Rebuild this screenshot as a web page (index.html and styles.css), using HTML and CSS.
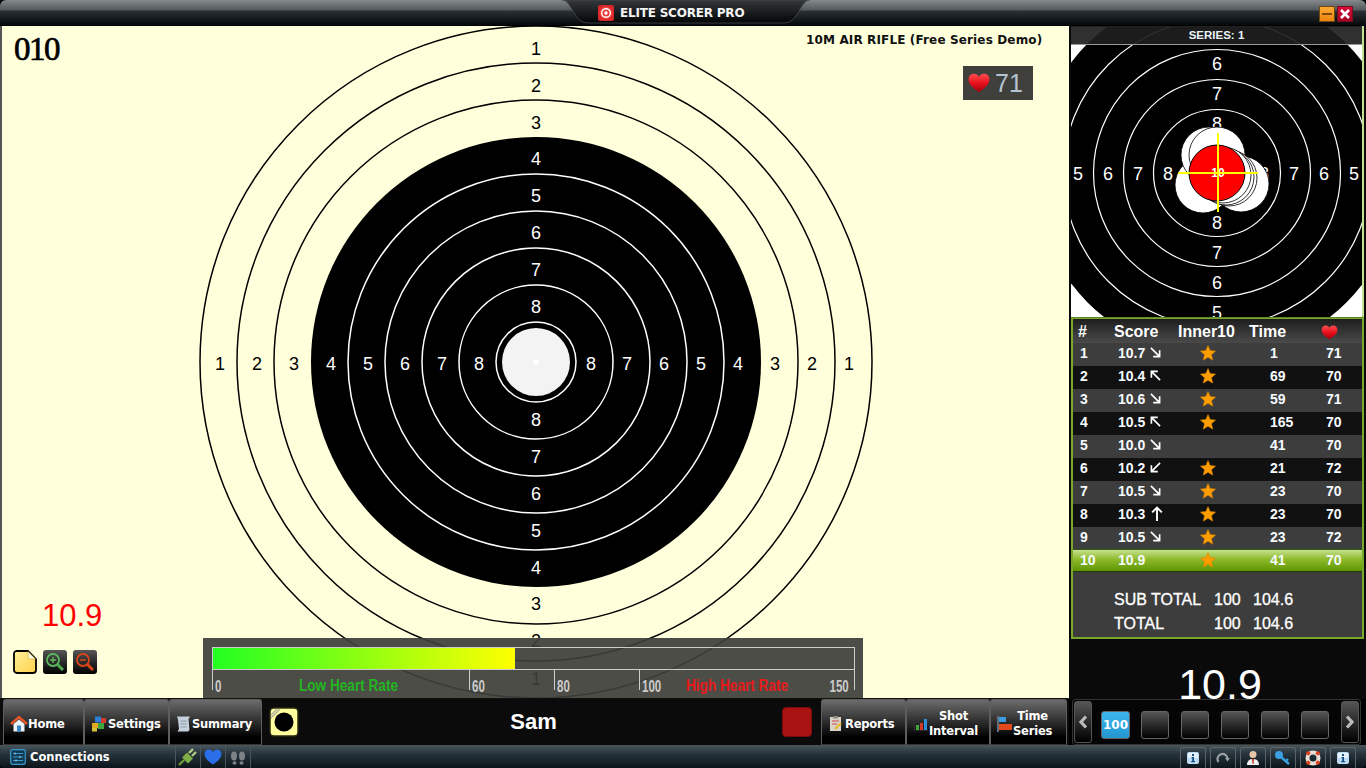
FILE: index.html
```html
<!DOCTYPE html>
<html lang="en">
<head>
    <meta charset="UTF-8">
    <title>Elite Scorer Pro</title>
    <link rel="stylesheet" href="styles.css">
</head>
<body>
<svg class="defs" width="0" height="0">
    <defs>
        <linearGradient id="heartFill" x1="0" y1="0" x2="0" y2="1">
            <stop offset="0" stop-color="#ff5050"/>
            <stop offset="0.5" stop-color="#e8101c"/>
            <stop offset="1" stop-color="#a00010"/>
        </linearGradient>
        <linearGradient id="noteFill" x1="0" y1="0" x2="1" y2="1">
            <stop offset="0" stop-color="#fff09a"/>
            <stop offset="1" stop-color="#ffd24a"/>
        </linearGradient>
        <symbol id="heart" viewBox="0 0 20 18">
            <path d="M10 17.5C4 13 .5 10 .5 5.6.5 2.6 2.8.6 5.4.6 7.4.6 9 1.6 10 3.4 11 1.6 12.600.6 14.600.6c2.600 0 4.900 2 4.900 5C19.500 10 16 13 10 17.500z" fill="url(#heartFill)"/>
        </symbol>
        <symbol id="star" viewBox="0 0 16 16">
            <polygon points="8,.5 10.200,5.600 15.600,6.100 11.500,9.700 12.800,15.200 8,12.300 3.200,15.200 4.500,9.700 .4,6.100 5.800,5.600" fill="#ff9d00" stroke="#d98200" stroke-width=".5"/>
        </symbol>
        <symbol id="arrow" viewBox="0 0 12 12">
            <path d="M1 1 10 10M10.500 3.500V10.500H3.500" fill="none" stroke="#fff" stroke-width="1.800"/>
        </symbol>
        <symbol id="info" viewBox="0 0 16 14">
            <rect x="2" y="1" width="12" height="12" rx="2" fill="#bcdcf5"/>
            <rect x="3" y="2" width="10" height="5" fill="#e4f2fc"/>
            <path d="M7 3h2v2H7zM6.500 6H9v4h1v1.200H6.200V10h1V7.200h-.7z" fill="#14507e"/>
        </symbol>
    </defs>
</svg>

<div class="app">
    <header class="titlebar">
        <div class="notch">
            <svg class="notch-bg" width="248" height="26" viewBox="0 0 248 26">
                <defs>
                    <linearGradient id="notchFill" x1="0" y1="0" x2="0" y2="1">
                        <stop offset="0" stop-color="#34383b"/>
                        <stop offset="1" stop-color="#030506"/>
                    </linearGradient>
                </defs>
                <path d="M0 0C10 0 11 23 26 23H222C237 23 238 0 248 0Z" fill="url(#notchFill)" stroke="#4b4f52" stroke-width=".7"/>
            </svg>
            <svg class="app-logo" width="16" height="16" viewBox="0 0 16 16">
                <rect width="16" height="16" rx="2" fill="#d62828"/>
                <circle cx="8" cy="8" r="6.500" fill="#f04040"/>
                <circle cx="8" cy="8" r="5" fill="#fff"/>
                <circle cx="8" cy="8" r="3.600" fill="#e83a3a"/>
                <circle cx="8" cy="8" r="1.700" fill="#fff"/>
            </svg>
            <span class="app-title">ELITE SCORER PRO</span>
        </div>
        <div class="win-btns">
            <div class="win-btn win-min"><span></span></div>
            <div class="win-btn win-close">
                <svg width="12" height="12" viewBox="0 0 12 12"><path d="M2 2 10 10M10 2 2 10" stroke="#fff" stroke-width="2.600"/></svg>
            </div>
        </div>
    </header>

    <div class="main">
        <section class="canvas">
            <svg class="target" width="1067" height="672" viewBox="2 26 1067 672">
                <circle cx="536" cy="362" r="336" class="ring-dark"/>
                <circle cx="536" cy="362" r="299" class="ring-dark"/>
                <circle cx="536" cy="362" r="262" class="ring-dark"/>
                <circle cx="536" cy="362" r="225" fill="#000"/>
                <circle cx="536" cy="362" r="188" class="ring-light"/>
                <circle cx="536" cy="362" r="151" class="ring-light"/>
                <circle cx="536" cy="362" r="114" class="ring-light"/>
                <circle cx="536" cy="362" r="77" class="ring-light"/>
                <circle cx="536" cy="362" r="40" class="ring-light"/>
                <circle cx="536" cy="362" r="34" fill="#f3f3f3"/>
                <circle cx="536" cy="362" r="3" fill="#fff"/>
                <g class="num num-dark">
                    <text x="536" y="48">1</text><text x="536" y="85">2</text><text x="536" y="122">3</text>
                    <text x="536" y="603">3</text><text x="536" y="640">2</text><text x="536" y="678">1</text>
                    <text x="220" y="363">1</text><text x="257" y="363">2</text><text x="294" y="363">3</text>
                    <text x="775" y="363">3</text><text x="812" y="363">2</text><text x="849" y="363">1</text>
                </g>
                <g class="num num-light">
                    <text x="536" y="158">4</text><text x="536" y="195">5</text><text x="536" y="232">6</text><text x="536" y="269">7</text><text x="536" y="306">8</text>
                    <text x="536" y="419">8</text><text x="536" y="456">7</text><text x="536" y="493">6</text><text x="536" y="530">5</text><text x="536" y="567">4</text>
                    <text x="331" y="363">4</text><text x="368" y="363">5</text><text x="405" y="363">6</text><text x="442" y="363">7</text><text x="479" y="363">8</text>
                    <text x="591" y="363">8</text><text x="627" y="363">7</text><text x="664" y="363">6</text><text x="701" y="363">5</text><text x="738" y="363">4</text>
                </g>
            </svg>

            <div class="shot-no">010</div>
            <div class="event-name">10M AIR RIFLE (Free Series Demo)</div>
            <div class="heart-badge">
                <svg width="22" height="20"><use href="#heart"/></svg>
                <span>71</span>
            </div>
            <div class="last-score">10.9</div>

            <div class="canvas-tools">
                <div class="tool tool-note">
                    <svg width="24" height="24" viewBox="0 0 24 24">
                        <path d="M3 1H15L23 9V20A3 3 0 0 1 20 23H4A3 3 0 0 1 1 20V4A3 3 0 0 1 3 1Z" fill="url(#noteFill)" stroke="#000" stroke-width="1.800"/>
                        <path d="M15 1.500V7A2 2 0 0 0 17 9H22.500Z" fill="#fffbe0" stroke="#c9a53a" stroke-width=".6"/>
                    </svg>
                </div>
                <div class="tool">
                    <svg width="24" height="24" viewBox="0 0 24 24">
                        <circle cx="10" cy="10" r="6" fill="none" stroke="#5cb85c" stroke-width="1.800"/>
                        <path d="M7 10h6M10 7v6" stroke="#5cb85c" stroke-width="1.500"/>
                        <path d="M14.500 14.500 20 20" stroke="#4ea84e" stroke-width="3"/>
                    </svg>
                </div>
                <div class="tool">
                    <svg width="24" height="24" viewBox="0 0 24 24">
                        <circle cx="10" cy="10" r="6" fill="none" stroke="#d8441a" stroke-width="1.800"/>
                        <path d="M7 10h6" stroke="#d8441a" stroke-width="1.500"/>
                        <path d="M14.500 14.500 20 20" stroke="#d8441a" stroke-width="3"/>
                    </svg>
                </div>
            </div>

            <div class="hr-panel">
                <div class="hr-bar"><div class="hr-fill" style="width: 47.1%"></div></div>
                <div class="hr-scale">
                    <div class="hr-seg hr-seg-low"><span>0</span><b class="hr-low">Low Heart Rate</b></div>
                    <div class="hr-seg hr-seg-a"><span>60</span></div>
                    <div class="hr-seg hr-seg-a"><span>80</span></div>
                    <div class="hr-seg hr-seg-high"><span>100</span><b class="hr-high">High Heart Rate</b><span class="hr-end">150</span></div>
                </div>
            </div>
        </section>

        <aside class="side">
            <div class="mini">
                <svg class="mini-target" width="291" height="290" viewBox="1071 27 291 290">
                    <rect x="1071" y="27" width="291" height="291" fill="#fff"/>
                    <circle cx="1217" cy="173" r="183" fill="#000"/>
                    <circle cx="1217" cy="173" r="153.500" class="mini-ring"/>
                    <circle cx="1217" cy="173" r="123.500" class="mini-ring"/>
                    <circle cx="1217" cy="173" r="93.500" class="mini-ring"/>
                    <circle cx="1217" cy="173" r="63.500" class="mini-ring"/>
                    <g class="num num-light">
                        <text x="1217" y="63">6</text><text x="1217" y="93">7</text><text x="1217" y="123">8</text>
                        <text x="1217" y="222">8</text><text x="1217" y="252">7</text><text x="1217" y="282">6</text><text x="1217" y="312">5</text>
                        <text x="1078" y="173">5</text><text x="1108" y="173">6</text><text x="1138" y="173">7</text><text x="1168" y="173">8</text>
                        <text x="1264" y="173">8</text><text x="1294" y="173">7</text><text x="1324" y="173">6</text><text x="1354" y="173">5</text>
                    </g>
                    <g class="shots">
                        <circle cx="1203" cy="185" r="28"/>
                        <circle cx="1241" cy="184" r="28"/>
                        <circle cx="1209" cy="155" r="28"/>
                        <circle cx="1217" cy="155" r="28"/>
                        <circle cx="1229" cy="178" r="28"/>
                        <circle cx="1226" cy="177" r="28"/>
                        <circle cx="1223" cy="175" r="28"/>
                    </g>
                    <circle cx="1217" cy="173" r="28" fill="#f00" stroke="#000"/>
                    <text x="1218" y="173" class="mini-ten">10</text>
                    <path d="M1218 133V212M1178 173H1258" stroke="#ff0" stroke-width="2"/>
                </svg>
                <div class="series-bar">SERIES: 1</div>
            </div>

            <div class="score-card">
                <div class="score-head">
                    <span>#</span><span>Score</span><span>Inner10</span><span>Time</span>
                    <svg width="17" height="15"><use href="#heart"/></svg>
                </div>
                <div class="score-row"><span>1</span><span>10.7</span><svg class="arr arr-se"><use href="#arrow"/></svg><svg class="star"><use href="#star"/></svg><span>1</span><span>71</span></div>
                <div class="score-row"><span>2</span><span>10.4</span><svg class="arr arr-nw"><use href="#arrow"/></svg><svg class="star"><use href="#star"/></svg><span>69</span><span>70</span></div>
                <div class="score-row"><span>3</span><span>10.6</span><svg class="arr arr-se"><use href="#arrow"/></svg><svg class="star"><use href="#star"/></svg><span>59</span><span>71</span></div>
                <div class="score-row"><span>4</span><span>10.5</span><svg class="arr arr-nw"><use href="#arrow"/></svg><svg class="star"><use href="#star"/></svg><span>165</span><span>70</span></div>
                <div class="score-row"><span>5</span><span>10.0</span><svg class="arr arr-se"><use href="#arrow"/></svg><i></i><span>41</span><span>70</span></div>
                <div class="score-row"><span>6</span><span>10.2</span><svg class="arr arr-sw"><use href="#arrow"/></svg><svg class="star"><use href="#star"/></svg><span>21</span><span>72</span></div>
                <div class="score-row"><span>7</span><span>10.5</span><svg class="arr arr-se"><use href="#arrow"/></svg><svg class="star"><use href="#star"/></svg><span>23</span><span>70</span></div>
                <div class="score-row"><span>8</span><span>10.3</span><svg class="arr arr-up" viewBox="0 0 12 14"><path d="M6 14V2M1.500 6 6 1.500 10.500 6" fill="none" stroke="#fff" stroke-width="1.800"/></svg><svg class="star"><use href="#star"/></svg><span>23</span><span>70</span></div>
                <div class="score-row"><span>9</span><span>10.5</span><svg class="arr arr-se"><use href="#arrow"/></svg><svg class="star"><use href="#star"/></svg><span>23</span><span>72</span></div>
                <div class="score-row score-row-now"><span>10</span><span>10.9</span><i></i><svg class="star"><use href="#star"/></svg><span>41</span><span>70</span></div>
                <div class="score-totals">
                    <div class="total-row"><span>SUB TOTAL</span><span>100</span><span>104.6</span></div>
                    <div class="total-row"><span>TOTAL</span><span>100</span><span>104.6</span></div>
                </div>
            </div>

            <div class="big-score">10.9</div>
        </aside>
    </div>

    <div class="bottom">
        <nav class="toolbar">
            <a class="tb-btn tb-home">
                <svg width="18" height="18" viewBox="0 0 18 18">
                    <path d="M1 9 9 2 17 9" fill="none" stroke="#e8562a" stroke-width="2.400"/>
                    <path d="M3.500 9 9 4.500 14.500 9V16.500H3.500Z" fill="#eef3f8"/>
                    <rect x="7" y="10.500" width="4" height="6" fill="#3d86c6"/>
                </svg>
                Home
            </a>
            <a class="tb-btn tb-settings">
                <svg width="18" height="18" viewBox="0 0 18 18">
                    <rect x="5" y="1.500" width="6" height="6" fill="#2f7fd8"/>
                    <rect x="11" y="3" width="5" height="5" fill="#d8392b"/>
                    <rect x="2" y="8" width="6" height="5" fill="#e0a81e"/>
                    <rect x="8" y="8" width="6" height="6" fill="#3fa83a"/>
                    <rect x="2" y="13" width="5" height="3.500" fill="#d8c23a"/>
                </svg>
                Settings
            </a>
            <a class="tb-btn tb-summary">
                <svg width="18" height="18" viewBox="0 0 18 18">
                    <path d="M3 1.500H16L14.500 4 15.500 15 14 16.500H3.500L5 14 4 4.500Z" fill="#c4d0dc"/>
                    <path d="M6.500 6H12.500M6.500 9H12.500M6.500 12H12.500" stroke="#8c9aa8"/>
                </svg>
                Summary
            </a>
            <div class="tb-toggle">
                <svg width="30" height="30" viewBox="0 0 30 30">
                    <rect x="1" y="1" width="28" height="28" rx="4" fill="#ffff9e" stroke="#2a2a10" stroke-width="1.500"/>
                    <path d="M2 11 11 2M2 8 8 2" stroke="#a8a8a0" stroke-width="1.200"/>
                    <circle cx="15" cy="15" r="9.500" fill="#000"/>
                </svg>
            </div>
            <div class="tb-name">Sam</div>
            <div class="tb-stop"></div>
            <a class="tb-btn tb-reports">
                <svg width="14" height="16" viewBox="0 0 14 16">
                    <rect x="1" y="1" width="11" height="14" fill="#d8d4c8"/>
                    <rect x="4" y="0" width="5" height="2.500" fill="#8a8a80"/>
                    <path d="M3 5H10M3 8H8" stroke="#c84a4a"/>
                    <path d="M6 13 12 7" stroke="#e8b82a" stroke-width="2.200"/>
                </svg>
                Reports
            </a>
            <a class="tb-btn tb-interval">
                <svg width="16" height="14" viewBox="0 0 16 14">
                    <path d="M1 0V13H15" fill="none" stroke="#333"/>
                    <rect x="3" y="8" width="3" height="5" fill="#3fa83a"/>
                    <rect x="7" y="6" width="3" height="7" fill="#d8392b"/>
                    <rect x="11" y="2" width="3" height="11" fill="#2f8fd8"/>
                </svg>
                <span class="tb-two">Shot<br>Interval</span>
            </a>
            <a class="tb-btn tb-series">
                <svg width="16" height="16" viewBox="0 0 16 16">
                    <rect x="0" y="0" width="2" height="16" fill="#5f6f80"/>
                    <rect x="2" y="1" width="7" height="5" fill="#3d9ce0"/>
                    <rect x="2" y="8" width="13" height="6" fill="#e04a1c"/>
                </svg>
                <span class="tb-two">Time<br>Series</span>
            </a>
        </nav>
        <div class="series-nav">
            <div class="nav-arrow">
                <svg width="10" height="14" viewBox="0 0 10 14"><path d="M8 1.500 3 7 8 12.500" fill="none" stroke="#bbb" stroke-width="3.200"/></svg>
            </div>
            <div class="tabs">
                <div class="tab tab-on">100</div>
                <div class="tab"></div>
                <div class="tab"></div>
                <div class="tab"></div>
                <div class="tab"></div>
                <div class="tab"></div>
            </div>
            <div class="nav-arrow">
                <svg width="10" height="14" viewBox="0 0 10 14"><path d="M2 1.500 7 7 2 12.500" fill="none" stroke="#bbb" stroke-width="3.200"/></svg>
            </div>
        </div>
    </div>

    <footer class="statusbar">
        <svg class="conn-icon" width="16" height="16" viewBox="0 0 16 16">
            <rect x=".7" y=".7" width="14.600" height="14.600" rx="2" fill="#123a52" stroke="#3a9ad0" stroke-width="1.200"/>
            <path d="M3 4.500H13M3 8H13M3 11.500H13" stroke="#3a9ad0"/>
            <path d="M5 3.500V5.500M10 7V9M6 10.500V12.500" stroke="#9fd6f5"/>
        </svg>
        <span class="conn-label">Connections</span>
        <div class="status-icons">
            <div class="status-icon">
                <svg width="20" height="18" viewBox="0 0 20 18">
                    <path d="M1 17 6 12" stroke="#6f9a3a" stroke-width="2.400"/>
                    <path d="M4 9.500 10 15.500 15 10.500 9 4.500Z" fill="#7fae46"/>
                    <path d="M11 5 15 1M14 8 18 4" stroke="#b0cc84" stroke-width="2.400"/>
                </svg>
            </div>
            <div class="status-icon">
                <svg width="18" height="16" viewBox="0 0 20 18">
                    <path d="M10 17.500C4 13 .5 10 .5 5.600.5 2.600 2.800.6 5.400.6 7.400.6 9 1.600 10 3.400 11 1.600 12.600.6 14.600.6c2.600 0 4.900 2 4.900 5C19.500 10 16 13 10 17.500z" fill="#2a6fe8"/>
                </svg>
            </div>
            <div class="status-icon">
                <svg width="18" height="16" viewBox="0 0 18 16">
                    <ellipse cx="5" cy="7" rx="3" ry="4.500" fill="#7c8286"/>
                    <ellipse cx="5.500" cy="14" rx="2" ry="1.800" fill="#7c8286"/>
                    <ellipse cx="13" cy="7" rx="3" ry="4.500" fill="#7c8286"/>
                    <ellipse cx="12.500" cy="14" rx="2" ry="1.800" fill="#7c8286"/>
                </svg>
            </div>
        </div>
        <div class="status-right">
            <div class="sb-btn"><svg width="16" height="14"><use href="#info"/></svg></div>
            <div class="sb-btn">
                <svg width="14" height="14" viewBox="0 0 14 14"><path d="M2.500 11A5 5 0 1 1 11.500 8" fill="none" stroke="#9aa0a4" stroke-width="2.200"/><path d="M9 7H14L11.500 10.500Z" fill="#9aa0a4"/></svg>
            </div>
            <div class="sb-btn">
                <svg width="14" height="16" viewBox="0 0 14 16"><circle cx="7" cy="4.500" r="3.500" fill="#e8c8a8"/><path d="M1 15C1 10.500 4 9 7 9S13 10.500 13 15Z" fill="#f0f0f0"/><path d="M6 9H8L7.500 14H6.500Z" fill="#c83a2a"/></svg>
            </div>
            <div class="sb-btn">
                <svg width="18" height="16" viewBox="0 0 18 16"><circle cx="5" cy="5" r="4" fill="#3aa0e0"/><path d="M7.500 7.500 15 14M12 11 14 9" stroke="#3aa0e0" stroke-width="2.400"/></svg>
            </div>
            <div class="sb-btn">
                <svg width="16" height="16" viewBox="0 0 16 16"><circle cx="8" cy="8" r="5.500" fill="none" stroke="#e8e0d8" stroke-width="4"/><path d="M4.500 4.500 2 2M11.500 4.500 14 2M4.500 11.500 2 14M11.500 11.500 14 14" stroke="#e0401c" stroke-width="3.600"/></svg>
            </div>
            <div class="sb-btn"><svg width="16" height="14"><use href="#info"/></svg></div>
        </div>
    </footer>
</div>
</body>
</html>
```

FILE: styles.css
```css
* {
    box-sizing: border-box;
}
html, body {
    margin: 0;
    height: 100%;
    overflow: hidden;
    background: #000;
}
body {
    font-family: "Liberation Sans", Arial, sans-serif;
    color: #fff;
}
.defs {
    position: absolute;
}
.app {
    width: 1366px;
    height: 768px;
    display: flex;
    flex-direction: column;
    overflow: hidden;
}

/* title bar */
.titlebar {
    position: relative;
    flex: 0 0 26px;
    border-radius: 6px 6px 0 0;
    border-bottom: 1px solid #000;
    background: linear-gradient(to bottom, #85898c 0, #53595c 10px, #2b3034 11px, #05090c 25px);
}
.notch {
    position: absolute;
    left: 562px;
    top: 0;
    width: 248px;
    height: 26px;
    display: flex;
    align-items: center;
    gap: 6px;
    padding: 0 0 1px 36px;
}
.notch-bg {
    position: absolute;
    left: 0;
    top: 0;
}
.app-logo, .app-title {
    position: relative;
}
.app-title {
    font-family: "DejaVu Sans", sans-serif;
    font-size: 12px;
    font-weight: bold;
    letter-spacing: -0.2px;
    color: #f4f4f4;
}
.win-btns {
    position: absolute;
    right: 13px;
    top: 6px;
    display: flex;
    gap: 2px;
}
.win-btn {
    width: 16px;
    height: 16px;
    display: flex;
    align-items: center;
    justify-content: center;
    border: 1px solid #6d4a10;
}
.win-min {
    background: linear-gradient(to bottom, #ffa933, #ee8410);
}
.win-min span {
    width: 10px;
    height: 2px;
    background: #7a4a08;
}
.win-close {
    background: linear-gradient(to bottom, #d80a34, #a80024);
    border-color: #701020;
}

/* main area */
.main {
    flex: 0 0 673px;
    display: flex;
    background: #111;
}
.canvas {
    position: relative;
    flex: 0 0 1069px;
    height: 672px;
    overflow: hidden;
    border-left: 2px solid #555;
    background: #ffffdc;
}
.target {
    display: block;
}
.ring-dark {
    fill: none;
    stroke: #000;
    stroke-width: 1.500;
}
.ring-light {
    fill: none;
    stroke: #fff;
    stroke-width: 1.500;
}
.num {
    transform: translateY(1px);
}
.num text {
    font-size: 18px;
    text-anchor: middle;
    dominant-baseline: central;
}
.num-dark text {
    fill: #000;
}
.num-light text {
    fill: #fff;
}
.shot-no {
    position: absolute;
    left: 12px;
    top: 5px;
    font-family: "Liberation Serif", serif;
    font-size: 33px;
    letter-spacing: -1.500px;
    -webkit-text-stroke: 0.7px #000;
    color: #000;
}
.event-name {
    position: absolute;
    left: 804px;
    top: 7px;
    font-family: "DejaVu Sans", sans-serif;
    font-weight: bold;
    font-size: 12px;
    letter-spacing: 0.14px;
    color: #111;
    white-space: nowrap;
}
.heart-badge {
    position: absolute;
    left: 961px;
    top: 40px;
    width: 70px;
    height: 34px;
    display: flex;
    align-items: center;
    gap: 5px;
    padding-left: 5px;
    background: #3f3f3c;
    font-size: 25px;
    color: #b4c4d0;
}
.last-score {
    position: absolute;
    left: 40px;
    top: 572px;
    font-size: 31px;
    color: #f00;
}
.canvas-tools {
    position: absolute;
    left: 11px;
    top: 624px;
    display: flex;
    gap: 6px;
}
.tool {
    width: 24px;
    height: 24px;
    border-radius: 3px;
    background: linear-gradient(to bottom, #555, #000);
}
.tool-note {
    background: none;
}
.hr-panel {
    position: absolute;
    left: 201px;
    top: 612px;
    width: 660px;
    height: 60px;
    padding: 9px 8px 0 9px;
    background: rgba(62, 62, 58, 0.92);
}
.hr-bar {
    height: 23px;
    border: 1px solid #ccc;
}
.hr-fill {
    height: 100%;
    background: linear-gradient(to right, #22ff22, #ffff00);
}
.hr-scale {
    display: flex;
    height: 20px;
    font-size: 16px;
    line-height: 33px;
    color: #ccc;
}
.hr-seg {
    display: flex;
    border-left: 1px solid #ccc;
    padding-left: 2px;
}
/* the original labels are set in a condensed face */
.hr-seg span {
    display: inline-block;
    font-weight: bold;
    transform: scaleX(0.72);
    transform-origin: left;
}
.hr-seg b {
    display: inline-block;
    line-height: 31px;
    transform: scaleX(0.85);
    transform-origin: left;
}
.hr-seg-low {
    flex: 0 0 257px;
}
.hr-seg-a {
    flex: 0 0 85px;
}
.hr-seg-high {
    flex: 1;
    border-right: 1px solid #ccc;
    padding-right: 5px;
}
.hr-seg .hr-end {
    margin-left: auto;
    transform-origin: right;
}
.hr-low {
    margin-left: 75px;
    color: #22b522;
}
.hr-high {
    margin-left: 17px;
    color: #e81a1a;
}

/* right side */
.side {
    position: relative;
    flex: 0 0 297px;
    padding-left: 2px;
    background: #0a0a0a;
    overflow: hidden;
}
.mini {
    position: relative;
    width: 293px;
    height: 292px;
    padding-top: 1px;
    border-right: 2px solid #c4e294;
    border-bottom: 2px solid #5d8a20;
    background: #222;
}
.mini-target {
    display: block;
}
.mini-ring {
    fill: none;
    stroke: #fff;
    stroke-width: 1.200;
}
.mini-ten {
    fill: #fff;
    font-size: 12px;
    font-weight: bold;
    text-anchor: middle;
    dominant-baseline: central;
}
.shots circle {
    fill: #fff;
    stroke: #000;
    stroke-width: .8;
}
.series-bar {
    position: absolute;
    left: 0;
    top: 1px;
    width: 291px;
    height: 18px;
    border-bottom: 1px solid #9a9a9a;
    background: rgba(30, 30, 30, 0.92);
    font-size: 11.500px;
    font-weight: bold;
    line-height: 17px;
    text-align: center;
    color: #eaf4fa;
}
.score-card {
    width: 293px;
    height: 321px;
    border: 2px solid #7aa82c;
    border-top-width: 1px;
    background: #3d3d3d;
}
.score-head {
    display: grid;
    grid-template-columns: 36px 64px 71px 72px 1fr;
    align-items: center;
    height: 24px;
    padding: 2px 0 0 5px;
    background: linear-gradient(to bottom, #1e1e1e, #4a4a4a);
    font-size: 16px;
    font-weight: bold;
}
.score-row {
    display: grid;
    grid-template-columns: 38px 32px 48px 72px 56px 1fr;
    align-items: center;
    height: 23px;
    padding: 0 0 4px 7px;
    font-size: 14px;
    font-weight: bold;
    color: #f6fbff;
}
.score-row:nth-child(odd) {
    background: #111;
}
.score-row:nth-child(even) {
    background: #3d3d3d;
}
.score-row-now:nth-child(n) {
    background: linear-gradient(to bottom, #c6e08e, #8dba2a 45%, #5f9600);
    border-top: 1px solid #2f5c10;
    border-bottom: 1px solid #1e3a08;
    margin-top: -1px;
    padding-bottom: 2px;
}
.arr {
    width: 11px;
    height: 13px;
}
.arr-nw {
    transform: rotate(180deg);
}
.arr-sw {
    transform: rotate(90deg);
}
.arr-up {
    width: 14px;
    height: 15px;
}
.star {
    width: 16px;
    height: 16px;
    margin-left: 2px;
}
.score-totals {
    padding: 17px 0 0 41px;
    font-size: 16px;
    -webkit-text-stroke: 0.3px #fff;
}
.total-row {
    display: grid;
    grid-template-columns: 100px 39px 1fr;
    height: 24px;
    line-height: 22px;
}
.big-score {
    position: absolute;
    left: 0;
    right: 0;
    top: 629px;
    padding-left: 5px;
    text-align: center;
    font-size: 43px;
    line-height: 58px;
    color: #fff;
}

/* bottom toolbars */
.bottom {
    position: relative;
    flex: 0 0 46px;
    display: flex;
    background: #000;
}
.toolbar {
    flex: 0 0 1069px;
    display: flex;
    align-items: stretch;
    padding: 0 2px 0 3px;
    background: #0b0b0b;
}
.tb-btn {
    display: flex;
    align-items: center;
    gap: 0;
    padding: 3px 0 0 6px;
    border: 1px solid #5e5e5e;
    border-bottom-color: #333;
    border-radius: 3px 3px 0 0;
    background: linear-gradient(to bottom, #6c6c6c, #000 85%);
    font-family: "DejaVu Sans", sans-serif;
    font-weight: bold;
    font-size: 11.500px;
    letter-spacing: -0.2px;
    color: #fff;
}
.tb-home {
    flex: 0 0 81px;
}
.tb-settings {
    flex: 0 0 85px;
    padding-left: 5px;
}
.tb-summary {
    flex: 0 0 93px;
    padding-left: 4px;
}
.tb-reports {
    flex: 0 0 85px;
    padding-left: 7px;
    gap: 2px;
}
.tb-interval {
    flex: 0 0 84px;
}
.tb-series {
    flex: 0 0 77px;
}
.tb-two {
    text-align: center;
    line-height: 15px;
}
.tb-toggle {
    margin: 8px 0 0 7px;
}
.tb-name {
    flex: 1;
    padding: 10px 14px 0 0;
    text-align: center;
    font-size: 22px;
    font-weight: bold;
}
.tb-stop {
    width: 30px;
    height: 30px;
    margin: 8px 9px 0 0;
    border-radius: 4px;
    background: #a81212;
    border: 1px solid #7a0c0c;
}
.series-nav {
    flex: 1;
    display: flex;
    align-items: center;
    margin: 0 5px 0 3px;
    padding: 1px;
    border: 1px solid #333;
    border-radius: 3px;
    background: #050505;
    z-index: 1;
}
.nav-arrow {
    flex: 0 0 18px;
    height: 42px;
    display: flex;
    align-items: center;
    justify-content: center;
    border: 1px solid #555;
    border-radius: 3px;
    background: linear-gradient(to bottom, #555, #000);
}
.tabs {
    flex: 1;
    display: flex;
    gap: 12px;
    padding: 6px 0 0 9px;
}
.tab {
    width: 28px;
    height: 28px;
    border: 1px solid #666;
    border-radius: 3px;
    background: linear-gradient(to bottom, #555, #000);
}
.tab-on {
    width: 29px;
    margin-right: -1px;
    background: linear-gradient(to bottom, #3cb6ee, #2496d0);
    font-family: "DejaVu Sans", sans-serif;
    font-size: 12px;
    font-weight: bold;
    line-height: 26px;
    text-align: center;
}
.statusbar {
    flex: 0 0 23px;
    display: flex;
    align-items: center;
    padding-left: 10px;
    border-radius: 0 0 4px 4px;
    background: linear-gradient(to bottom, #4a555c, #26333b 40%, #0b141a);
}
.conn-label {
    margin-left: 4px;
    font-family: "DejaVu Sans", sans-serif;
    font-weight: bold;
    font-size: 11.500px;
}
.status-icons {
    display: flex;
    margin-left: 65px;
    height: 23px;
    border-left: 1px solid #4a555c;
}
.status-icon {
    width: 25px;
    display: flex;
    align-items: center;
    justify-content: center;
    border-right: 1px solid #4a555c;
}
.status-right {
    margin-left: auto;
    margin-right: 10px;
    display: flex;
    gap: 4px;
    align-self: flex-end;
}
.sb-btn {
    width: 26px;
    height: 21px;
    display: flex;
    align-items: center;
    justify-content: center;
    border: 1px solid #5a6468;
    border-bottom: 0;
    border-radius: 3px 3px 0 0;
}
```
